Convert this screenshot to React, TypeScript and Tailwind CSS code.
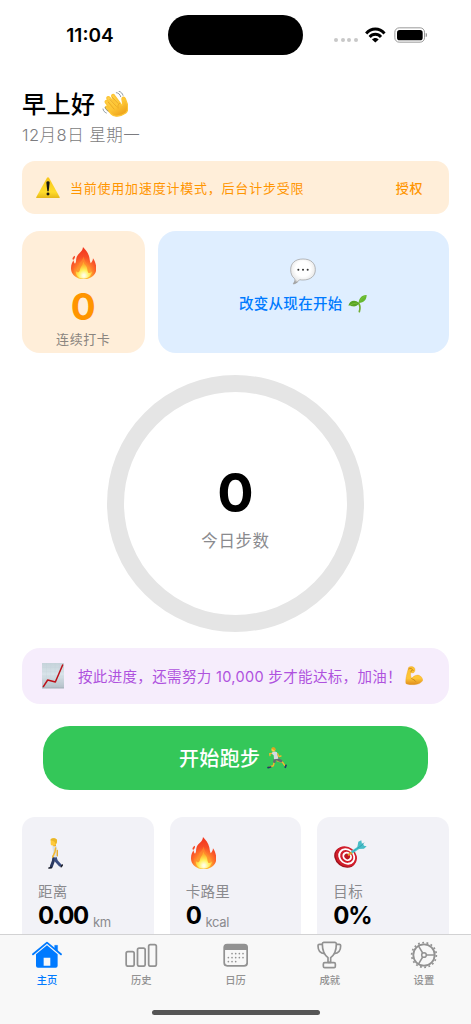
import React from 'react'

type IconProps = { className?: string }

const Wave = ({ className }: IconProps) => (
  <svg className={className} viewBox="305 272 78 78" fill="none">
    <defs>
      <linearGradient id="hand" x1="0" y1="0" x2="0.7" y2="1">
        <stop offset="0" stopColor="#ffd75a" />
        <stop offset="0.6" stopColor="#fdc534" />
        <stop offset="1" stopColor="#eda21b" />
      </linearGradient>
    </defs>
    <path d="M352 347c-8 2-14-1-20-7l-14-15c-5-6 0-9 4-6l10 8-16-19c-4-6 2-10 6-5l16 17-17-23c-4-7 3-11 8-5l18 21-12-23c-3-7 4-10 8-4l20 27c3 3 5 1 4-4l-2-12c-1-8 7-9 10-2l6 17c2 9 2 20-5 26-7 5-15 8-24 9z" fill="url(#hand)" stroke="#fdc534" strokeWidth="4" strokeLinejoin="round" />
    <path d="M329 298l19 20m-24-12l17 20m-5-35l17 18m5 0c-5 3-6 8-5 14" stroke="#df981d" strokeWidth="1.8" strokeLinecap="round" />
    <path d="M308 326c1 6 5 10 10 12M306 320m8 1c1 5 5 9 9 11M348 277c7 1 11 5 13 12M356 273c7 2 10 6 12 12" stroke="#687782" strokeWidth="2.2" strokeLinecap="round" />
  </svg>
)

const Warning = ({ className }: IconProps) => (
  <svg className={className} viewBox="107 80 72 64">
    <defs>
      <linearGradient id="warn" x1="0" y1="0" x2="0" y2="1">
        <stop offset="0" stopColor="#f7c51c" />
        <stop offset="0.7" stopColor="#ffdc2b" />
        <stop offset="1" stopColor="#e6b619" />
      </linearGradient>
    </defs>
    <path d="M140 82q3-3 6 0l32 58q1 4-3 4h-64q-5 0-3-4z" fill="url(#warn)" />
    <path d="M138 97q0-4 5-4t5 4l-3 26h-4z" fill="#171714" />
    <circle cx="143" cy="131" r="4.5" fill="#171714" />
  </svg>
)

const Flame = ({ className }: IconProps) => (
  <svg className={className} viewBox="212 290 76 97">
    <defs>
      <radialGradient id="flame" cx="0.5" cy="0.9" r="0.85">
        <stop offset="0.2" stopColor="#ffce38" />
        <stop offset="0.48" stopColor="#ff7a2b" />
        <stop offset="0.7" stopColor="#f84d27" />
        <stop offset="1" stopColor="#f2371f" />
      </radialGradient>
      <radialGradient id="core" cx="0.5" cy="0.82" r="0.65">
        <stop offset="0.1" stopColor="#fffde0" />
        <stop offset="0.5" stopColor="#fff15c" />
        <stop offset="1" stopColor="#ffc72e" stopOpacity="0.6" />
      </radialGradient>
    </defs>
    <path d="M248 290c8 8 16 18 19 31 1 7 2 13 4 18 4-3 7-9 7-15 6 8 10 20 10 31 0 18-15 32-37 32s-39-13-39-33c0-12 5-19 7-24 2 4 2 8 5 10 5-5 2-12 5-20 4-11 18-15 19-30z" fill="url(#flame)" />
    <path d="M224 316c1 5-2 11-6 13-4-5 0-10 6-13z" fill="#f44b28" />
    <path d="M250 318c-2 12-12 17-15 26-3 7 0 12-4 16-4-1-6-5-8-8-5 16 5 32 27 34 18 0 30-12 30-28-3 6-7 9-12 9 0-10-3-17-7-23-4-8-9-13-11-26z" fill="#ff8f2d" opacity="0.6" />
    <path d="M249 334c-2 12-9 15-10 25-2 5-4 8-7 7-3-1-4-3-5-5-3 14 8 24 23 24s25-10 25-22c-3 4-7 6-11 4-4-7-2-13-6-19-4-6-8-8-9-14z" fill="url(#core)" />
  </svg>
)

const Speech = ({ className }: IconProps) => (
  <svg className={className} viewBox="166 322 78 81">
    <defs>
      <radialGradient id="speech" cx="0.5" cy="0.4" r="0.6">
        <stop offset="0.5" stopColor="#ffffff" />
        <stop offset="0.85" stopColor="#e8e8e8" />
        <stop offset="1" stopColor="#a8a8a8" />
      </radialGradient>
    </defs>
    <path d="M205 325c23 0 37 12 37 32 0 19-14 31-37 31-4 0-7 0-10-1-5 6-10 11-18 13-3 0 1-3 3-8 1-4 1-6-1-9-7-5-11-14-11-26 0-20 14-32 37-32z" fill="url(#speech)" stroke="#989898" strokeWidth="2" />
    <path d="M191 357h.1M205 357h.1M219 357h.1" stroke="#333" strokeWidth="6" strokeLinecap="round" />
  </svg>
)

const Seedling = ({ className }: IconProps) => (
  <svg className={className} viewBox="338 436 57 55">
    <path d="M370 464c5 8 5 16 2 25" fill="none" stroke="#71ad31" strokeWidth="5" strokeLinecap="round" />
    <path d="M370 467c-1-17 9-29 24-28 0 13-7 24-24 24z" fill="#65b82f" />
    <path d="M371 464c-5 8-12 10-19 9-5-1-9-4-13-2 3-13 19-21 32-7z" fill="#58a426" />
    <path d="M373 457c5-7 10-11 18-15M344 470c8-5 15-7 22-6" fill="none" stroke="#84c640" strokeWidth="2" />
  </svg>
)

const ChartUp = ({ className }: IconProps) => (
  <svg className={className} viewBox="126 71 66 76">
    <defs>
      <linearGradient id="paper" x1="0" y1="0" x2="0" y2="1">
        <stop offset="0" stopColor="#c5d3da" />
        <stop offset="0.45" stopColor="#d9e4ea" />
        <stop offset="1" stopColor="#b3bfc7" />
      </linearGradient>
    </defs>
    <path d="M126 71h66v76h-66z" fill="url(#paper)" />
    <path d="M139 71v76M152 71v76M165 71v76M178 71v76M126 84h66M126 97h66M126 110h66M126 123h66M126 136h66" stroke="#c3d0d7" strokeWidth="0.7" />
    <path d="M130 142l13-20 23 6 22-51" fill="none" stroke="#bc1018" strokeWidth="4.5" strokeLinecap="round" strokeLinejoin="round" />
    <path d="M126 146h66" stroke="#9daab2" strokeWidth="2" />
  </svg>
)

const Muscle = ({ className }: IconProps) => (
  <svg className={className} viewBox="508 80 55 58">
    <defs>
      <linearGradient id="arm" x1="0" y1="0" x2="0" y2="1">
        <stop offset="0" stopColor="#fcc02f" />
        <stop offset="0.65" stopColor="#ffc637" />
        <stop offset="1" stopColor="#df8c1c" />
      </linearGradient>
    </defs>
    <path d="M519 84c4-4 16-3 18 3 2 5 1 10-3 13-4 2-6 0-8-1-2 7-1 13 2 18 7-8 15-11 22-9 6 2 10 8 12 15-5 8-15 13-26 13-10 0-19 0-25-3-3-8 2-29 8-49z" fill="url(#arm)" stroke="#e9a427" strokeWidth="1" />
    <path d="M519 89c5-3 9-2 11 1m-4 8c-1-5 3-7 7-5m-5 25c5 3 10 4 12 8" stroke="#b97718" strokeWidth="2.2" fill="none" strokeLinecap="round" />
  </svg>
)

const Runner = ({ className }: IconProps) => (
  <svg className={className} viewBox="98 320 62 66" fill="none" strokeLinecap="round" strokeLinejoin="round">
    <path d="M114 339l-8 1 1 6" stroke="#f0b630" strokeWidth="4" />
    <path d="M121 360l-4 16-12 4m24-19l16 5 6 9" stroke="#f0b630" strokeWidth="4.5" />
    <path d="M123 354l-3 10m6-10l9 6 5 2" stroke="#656a70" strokeWidth="8" />
    <path d="M114 335q8-3 14 1l4 19-13 2-1-12-5-4z" fill="#d3dbe1" />
    <path d="M130 340l4 9 6-2" stroke="#f0b630" strokeWidth="4" />
    <path d="M109 380l-8 2m54-7l-2 6" stroke="#233a66" strokeWidth="5" />
    <circle cx="117" cy="328" r="6" fill="#fac947" />
    <path d="M111 325c2-6 11-6 13 1l-2 6c-2-4-6-5-11-7z" fill="#dfa220" />
  </svg>
)

const Walker = ({ className }: IconProps) => (
  <svg className={className} viewBox="145 112 46 94" fill="none" strokeLinecap="round" strokeLinejoin="round">
    <path d="M163 168l-2 14-6 16" stroke="#2b3960" strokeWidth="9" />
    <path d="M166 168l4 14 11 12" stroke="#3a4d80" strokeWidth="9" />
    <path d="M155 202l-7 1m37-4l3-5" stroke="#181d2b" strokeWidth="5" />
    <path d="M158 136q8-5 13 1l4 20-1 12q-7 4-15 0l1-15z" fill="#dce2e7" />
    <path d="M168 142l-2 12-7 16" stroke="#f6b82d" strokeWidth="4.500" />
    <path d="M173 150v16" stroke="#e9a928" strokeWidth="4" />
    <path d="M158 126h11v11h-8z" fill="#edae29" />
    <path d="M153 117c3-6 18-5 19 2 1 7-2 13-7 15-6 2-12 0-12-4z" fill="#ffca3b" />
    <path d="M152 119c0-8 17-9 20-1 1 5-1 10-4 13-2-7-5-10-16-12z" fill="#e8b629" />
  </svg>
)

const Target = ({ className }: IconProps) => (
  <svg className={className} viewBox="299 121 100 86">
    <g transform="rotate(38 335 170)">
      <ellipse cx="335" cy="174" rx="35" ry="29" fill="#9e111c" />
      <ellipse cx="336" cy="170" rx="34" ry="29" fill="#d11e2b" />
      <ellipse cx="337" cy="169" rx="27" ry="23" fill="#fff" />
      <ellipse cx="337" cy="169" rx="21" ry="18" fill="#d11e2b" />
      <ellipse cx="338" cy="168" rx="15" ry="13" fill="#fff" />
      <ellipse cx="338" cy="168" rx="9" ry="8" fill="#bd1722" />
    </g>
    <path d="M343 165l13-8" stroke="#e3a32c" strokeWidth="6" strokeLinecap="round" />
    <path d="M352 158l27-18" stroke="#4fc8d0" strokeWidth="8" />
    <path d="M369 143l3-17 9-4 2 11 3-3 3 8 8 2-8 7-18 1z" fill="#48bdc7" />
    <path d="M355 156l27-19 7-8" fill="none" stroke="#2597a6" strokeWidth="2" />
  </svg>
)

const Wifi = ({ className }: IconProps) => (
  <svg className={className} viewBox="391 80 63 47" fill="none" stroke="#000" strokeWidth="8.500">
    <path d="M394.500 99.500c15-18 40-18 55 0M405 110c9-11 25-11 34 0" />
    <path d="M412 117.500c6-6 14-6 20 0l-10 9z" fill="#000" stroke="none" />
  </svg>
)

const Battery = ({ className }: IconProps) => (
  <svg className={className} viewBox="476 80 101 48">
    <rect x="478.500" y="82.500" width="89" height="43" rx="13" fill="none" stroke="#999" strokeWidth="3" />
    <rect x="485" y="89" width="77" height="31" rx="8" fill="#000" />
    <path d="M571 98q5 1 5 6t-5 6z" fill="#999" />
  </svg>
)

const HomeIcon = ({ className }: IconProps) => (
  <svg className={className} viewBox="97 423 91 82">
    <path d="M100 463l42-35 42 35" fill="none" stroke="currentColor" strokeWidth="5.500" strokeLinecap="round" strokeLinejoin="round" />
    <path d="M165 436h9v18l-9-8z" fill="currentColor" stroke="currentColor" strokeWidth="1" />
    <path fillRule="evenodd" d="M142 436l32 27v34q0 6-6 6h-53q-6 0-6-6v-34zM132 473v24h20v-24z" fill="currentColor" />
  </svg>
)

const BarsIcon = ({ className }: IconProps) => (
  <svg className={className} viewBox="375 427 99 74" fill="none" stroke="currentColor" strokeWidth="5.200">
    <rect x="378.500" y="452.500" width="24" height="44" rx="5" />
    <rect x="412.500" y="442.500" width="23" height="54" rx="5" />
    <rect x="446" y="432" width="23" height="64.500" rx="5" />
  </svg>
)

const CalendarIcon = ({ className }: IconProps) => (
  <svg className={className} viewBox="668 427 77 73">
    <rect x="671.500" y="431.500" width="69" height="64" rx="9" fill="none" stroke="currentColor" strokeWidth="5.200" />
    <path d="M671 448v-7q0-10 10-10h50q10 0 10 10v7z" fill="currentColor" />
    <path d="M698 459h.1M709 459h.1M720 459h.1M731 459h.1M687 471h.1M698 471h.1M709 471h.1M720 471h.1M731 471h.1M687 483h.1M698 483h.1M709 483h.1" transform="translate(-3 0)" stroke="currentColor" strokeWidth="5" strokeLinecap="round" />
  </svg>
)

const TrophyIcon = ({ className }: IconProps) => (
  <svg className={className} viewBox="246 422 74 83" fill="none" stroke="currentColor" strokeWidth="5" strokeLinejoin="round">
    <path d="M266 426h34q4 0 4 5c0 20-5 32-17 41v14h-8v-14c-12-9-17-21-17-41q0-5 4-5z" />
    <path d="M262 432h-9q-4 0-4 4c0 14 6 23 20 24M304 432h9q4 0 4 4c0 14-6 23-20 24" />
    <rect x="265" y="487" width="36" height="15" rx="4" />
  </svg>
)

const GearIcon = ({ className }: IconProps) => (
  <svg className={className} viewBox="524 422 84 84" fill="none" stroke="currentColor">
    <circle cx="566" cy="464" r="37" strokeWidth="5" strokeDasharray="5.500 7.415" />
    <circle cx="566" cy="464" r="32" strokeWidth="5.500" />
    <circle cx="566" cy="464" r="7" strokeWidth="4.500" />
    <path d="M573 464h26M562 458l-13-22M562 470l-13 22" strokeWidth="4.500" />
  </svg>
)

const stats = [
  { label: '距离', value: '0.00', unit: 'km', icon: <Walker className="ml-[10px] h-[31px] w-[15.300px]" /> },
  { label: '卡路里', value: '0', unit: 'kcal', icon: <Flame className="ml-[5px] h-[32.300px] w-[25.300px]" /> },
  { label: '目标', value: '0%', unit: '', icon: <Target className="ml-[1px] h-[28.700px] w-[33.300px]" /> },
]

const tabs = [
  { label: '主页', icon: <HomeIcon className="h-[27.300px] w-[30.300px]" />, active: true },
  { label: '历史', icon: <BarsIcon className="h-[24.700px] w-[33px]" /> },
  { label: '日历', icon: <CalendarIcon className="h-[24.300px] w-[25.700px]" /> },
  { label: '成就', icon: <TrophyIcon className="h-[27.700px] w-[24.700px]" /> },
  { label: '设置', icon: <GearIcon className="h-[28px] w-[28px]" /> },
]

const StatusBar = () => (
  <header className="grid h-[69px] shrink-0 grid-cols-[168px_135px_168px] pt-[15px]">
    <div className="flex h-[42px] items-center justify-center pl-3 text-[19px] font-semibold">11:04</div>
    <div className="h-[39.500px] rounded-full bg-black" />
    <div className="flex h-[40px] items-center pl-[31px]">
      <div className="mt-[10px] flex gap-[2.500px]">
        <span className="size-[4px] rounded-full bg-[#c8c8c8]" />
        <span className="size-[4px] rounded-full bg-[#c8c8c8]" />
        <span className="size-[4px] rounded-full bg-[#c8c8c8]" />
        <span className="size-[4px] rounded-full bg-[#c8c8c8]" />
      </div>
      <Wifi className="ml-[7px] h-[15.700px] w-[21px]" />
      <Battery className="ml-[8px] h-[16px] w-[33.700px]" />
    </div>
  </header>
)

const App = () => {
  return (
    <div className="flex h-[1024px] w-[471px] flex-col overflow-hidden bg-white font-[Inter,'Noto_Sans_CJK_SC',sans-serif] whitespace-nowrap text-black">
      <StatusBar />

      <main className="min-h-0 flex-1 overflow-hidden px-[22px]">
        <div className="mt-[20px] flex h-[30px] items-center">
          <h1 className="pt-[2px] text-[24px] font-medium tracking-[0.500px]">早上好</h1>
          <Wave className="ml-[6px] size-[26px]" />
        </div>
        <p className="mt-[4px] h-[24px] text-[16.500px] leading-[24px] font-light tracking-[0.500px] text-[#7c7c80]">12月8日 星期一</p>

        <div className="mt-[14px] flex h-[53px] items-center rounded-[13px] bg-[#ffeed9] pr-[26px] pl-[14px] text-[#ff9500]">
          <Warning className="h-[21.300px] w-[24px]" />
          <span className="ml-[10px] flex-1 pt-[2px] text-[13px] tracking-[0.780px]">当前使用加速度计模式，后台计步受限</span>
          <span className="pt-[2px] text-[13px] font-medium tracking-[0.600px]">授权</span>
        </div>

        <div className="mt-[16.500px] flex h-[122.500px] gap-[13px]">
          <div className="flex w-[122.500px] flex-col items-center rounded-[18px] bg-[#ffeed9] pt-[16px]">
            <Flame className="h-[32.300px] w-[25.300px]" />
            <span className="mt-[9.500px] text-[37px] leading-[37px] font-bold text-[#ff9500]">0</span>
            <span className="mt-[4px] text-[13px] leading-[20px] tracking-[0.600px] text-[#8a8580]">连续打卡</span>
          </div>
          <div className="flex flex-1 flex-col items-center rounded-[18px] bg-[#dfeeff] pt-[27px]">
            <Speech className="h-[27px] w-[26px]" />
            <div className="mt-[7px] flex h-[24px] items-center pr-[1px] text-[14.500px] font-medium text-[#007aff]">
              <span className="tracking-[0.300px]">改变从现在开始</span>
              <Seedling className="ml-[5px] h-[18.300px] w-[19px]" />
            </div>
          </div>
        </div>

        <div className="mx-auto mt-[22px] flex size-[257px] flex-col items-center rounded-full border-[17px] border-[#e5e5e5] pt-[74px]">
          <span className="text-[54px] leading-[54px] font-bold">0</span>
          <span className="mt-[9px] text-[16.500px] leading-[24px] tracking-[0.600px] text-[#8a8a8e]">今日步数</span>
        </div>

        <div className="mt-[16px] flex h-[56px] items-center rounded-[18px] bg-[#f6edfc] pl-[20px] text-[#af52de]">
          <ChartUp className="h-[25.300px] w-[22px]" />
          <span className="ml-[14px] pt-[2px] text-[14.500px] tracking-[0.340px]">按此进度，还需努力 10,000 步才能达标，加油！</span>
          <Muscle className="ml-[3px] h-[19.300px] w-[18.300px]" />
        </div>

        <button className="mx-auto mt-[21.500px] flex h-[64.500px] w-[385px] items-center justify-center rounded-[27px] bg-[#34c759] pr-[4px] text-[20px] font-medium tracking-[0.300px] text-white">
          <span className="pt-[2px]">开始跑步</span>
          <Runner className="ml-[7px] h-[22px] w-[20.700px]" />
        </button>

        <div className="mt-[27px] grid grid-cols-3 gap-[16px]">
          {stats.map((s) => (
            <div key={s.label} className="h-[160px] rounded-[13px] bg-[#f2f2f7] pt-[19px] pl-[16px]">
              <div className="flex h-[33px] items-end">{s.icon}</div>
              <div className="mt-[12px] text-[14.500px] leading-[22px] tracking-[0.300px] text-[#8a8a8e]">{s.label}</div>
              <div className="-mt-px flex items-start leading-[28px]">
                <span className="text-[24px] font-bold tracking-[-1.300px]">{s.value}</span>
                <span className="ml-[5px] pt-[6px] text-[13px] tracking-[-0.300px] text-[#8a8a8e]">{s.unit}</span>
              </div>
            </div>
          ))}
        </div>
      </main>

      <footer className="flex h-[90px] shrink-0 flex-col border-t border-[#d2d2d3] bg-[#f8f8f8]">
        <nav className="grid grid-cols-5 pt-[6px]">
          {tabs.map((t) => (
            <div key={t.label} className={t.active ? 'flex flex-col items-center text-[#007aff]' : 'flex flex-col items-center text-[#929292]'}>
              <div className="flex h-[28px] items-center">{t.icon}</div>
              <span className="mt-[2.500px] text-[10.300px] leading-[16px] font-medium">{t.label}</span>
            </div>
          ))}
        </nav>
        <div className="mx-auto mt-[22px] h-[5.500px] w-[168px] rounded-full bg-[#555]" />
      </footer>
    </div>
  )
}

export default App
